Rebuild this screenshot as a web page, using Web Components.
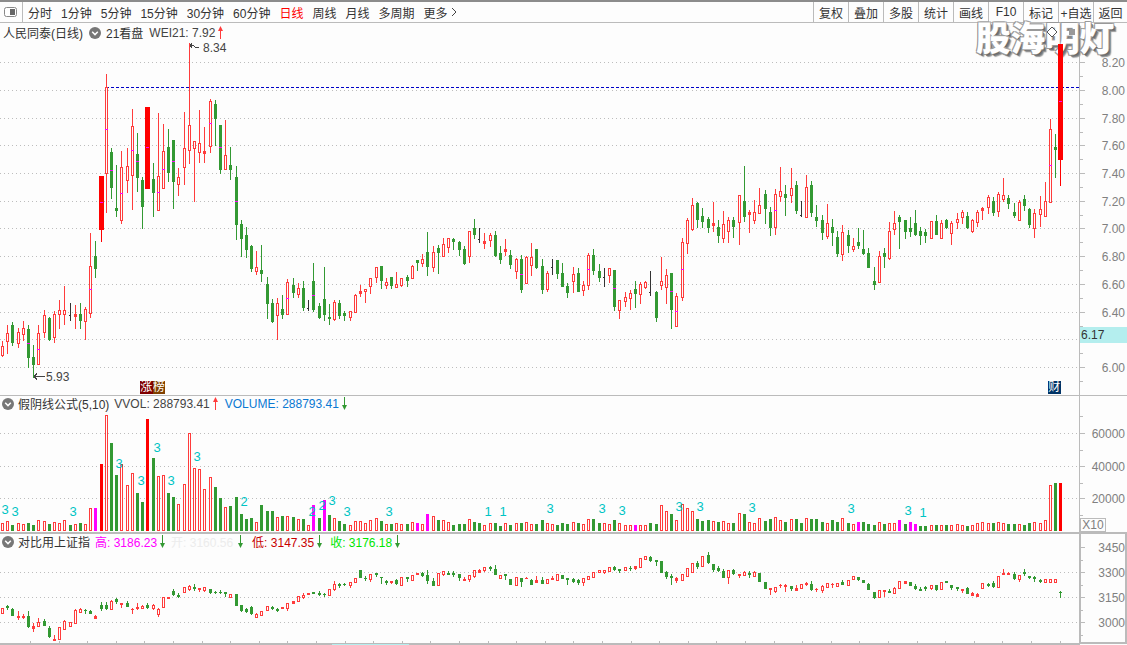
<!DOCTYPE html>
<html lang="zh">
<head>
<meta charset="utf-8">
<title>K线</title>
<style>
    html, body { margin: 0; background: #fdfdfd; }
    body { font: 12px "Liberation Sans", "Noto Sans CJK SC", sans-serif; color: #333; }
</style>
</head>
<body>
<stock-screen>
    <tool-bar slot="toolbar">
        <tool-item>分时</tool-item>
        <tool-item>1分钟</tool-item>
        <tool-item>5分钟</tool-item>
        <tool-item>15分钟</tool-item>
        <tool-item>30分钟</tool-item>
        <tool-item>60分钟</tool-item>
        <tool-item active>日线</tool-item>
        <tool-item>周线</tool-item>
        <tool-item>月线</tool-item>
        <tool-item>多周期</tool-item>
        <tool-item more>更多</tool-item>
        <tool-cell slot="cells">复权</tool-cell>
        <tool-cell slot="cells">叠加</tool-cell>
        <tool-cell slot="cells">多股</tool-cell>
        <tool-cell slot="cells">统计</tool-cell>
        <tool-cell slot="cells">画线</tool-cell>
        <tool-cell slot="cells">F10</tool-cell>
        <tool-cell slot="cells">标记</tool-cell>
        <tool-cell slot="cells">+自选</tool-cell>
        <tool-cell slot="cells" style="width:34px">返回</tool-cell>
    </tool-bar>

    <chart-panel slot="main" top="23" height="372" line="1" chart="main">
        <chart-legend slot="legend" style="padding-left:3px">
            <span>人民同泰(日线)</span>
            <round-toggle style="margin-left:6px"></round-toggle>
            <span style="margin-left:5px">21看盘</span>
            <span style="margin-left:6px;color:#444">WEI21: 7.92</span>
            <mini-arrow dir="up" style="margin-left:3px"></mini-arrow>
        </chart-legend>
        <y-axis slot="axis" top="23" height="372"
            labels="62:8.20 90:8.00 118:7.80 145:7.60 173:7.40 201:7.20 228:7.00 256:6.80 284:6.60 312:6.40 367:6.00"
            minor="76 104 132 159 187 215 242 270 298 326 353 381">
            <axis-flag kind="price" style="top:304px">6.17</axis-flag>
        </y-axis>
        <sign-badge slot="badges" style="left:140px;background:#800000">涨</sign-badge>
        <sign-badge slot="badges" style="left:152.5px;background:#804000">榜</sign-badge>
        <sign-badge slot="badges" style="left:1048px;background:#003366">财</sign-badge>
    </chart-panel>

    <chart-panel slot="volume" top="396" height="136" line="2" chart="volume">
        <chart-legend slot="legend" style="padding-left:2px;height:15px">
            <round-toggle></round-toggle>
            <span style="margin-left:4px">假阴线公式(5,10)</span>
            <span style="margin-left:5px;color:#444">VVOL: 288793.41</span>
            <mini-arrow dir="up" style="margin-left:3px"></mini-arrow>
            <span style="margin-left:7px;color:#0a78d2">VOLUME: 288793.41</span>
            <mini-arrow dir="down" style="margin-left:3px"></mini-arrow>
        </chart-legend>
        <y-axis slot="axis" top="396" height="136"
            labels="433:60000 466:40000 498:20000"
            minor="416 450 483 515">
            <axis-flag kind="scale" style="top:122px">X10</axis-flag>
        </y-axis>
    </chart-panel>

    <chart-panel slot="index" top="534" height="111" chart="index">
        <chart-legend slot="legend" style="padding-left:2px;height:15px">
            <round-toggle></round-toggle>
            <span style="margin-left:4px">对比用上证指</span>
            <span style="margin-left:5px;color:#ff00ff">高: 3186.23</span>
            <mini-arrow dir="down" style="margin-left:3px"></mini-arrow>
            <span style="margin-left:6px;color:#ececec">开: 3160.56</span>
            <mini-arrow dir="down" style="margin-left:5px"></mini-arrow>
            <span style="margin-left:9px;color:#c80000">低: 3147.35</span>
            <mini-arrow dir="down" style="margin-left:3px"></mini-arrow>
            <span style="margin-left:8px;color:#00e600">收: 3176.18</span>
            <mini-arrow dir="down" style="margin-left:3px"></mini-arrow>
        </chart-legend>
        <y-axis slot="axis" top="534" height="111" boxed
            labels="547:3450 572:3300 597:3150 622:3000"
            minor="560 585 610 635"></y-axis>
    </chart-panel>

    <water-mark slot="overlay">股海明灯</water-mark>
</stock-screen>

<script>
// numbers below are read off the picture at 3x: y = y0 + v / 3
const colOf = i => Math.floor(2.6 + 5.187 * i);

function parseSeg(start, y0, str) {
    return str.trim().split(/\s+/).map((tok, n) => {
        const v = tok.slice(1).split(',').map(Number);
        const y = k => Math.round(y0 + k / 3);
        const top = y(v[0]);
        const bot = v[1] === undefined ? top : y(v[1]);
        return {
            i: start + n,
            t: tok[0],
            top,
            bot,
            hi: v[2] === undefined ? top : y(v[2]),
            lo: v[3] === undefined ? bot : y(v[3]),
            mid: v[4] === undefined ? null : y(v[4]),
        };
    });
}

const MAIN = [
    ...parseSeg(0, 60, `r858,885,842,888 r820,842,795,878 g795,845,786,855 r816,848,803,860 r804,821,783,840 g807,890,795,920,850 g891,912,855,950
        r820,913,795,913,868 r766,815,750,832 g774,837,770,840 r762,830,752,845 r751,761,720,805 r750,763,678,792 k765,765,728,780 s763,767,735,803
        g762,780,728,803 r747,782,740,838 r618,760,518,772,688 g588,623,543,650 R348,506,348,543,427 r82,338,42,455,207 g276,380,264,414,330 g444,449,315,467
        r321,480,273,490,400 r318,359,264,397 r198,344,147,447,270 g283,350,219,392,303 g360,437,351,503 R141,383,141,383,261 g357,395,309,467
        r348,449,159,449,397 r273,383,192,383,327 g261,335,207,363 g240,362,240,443,303 r351,371,323,405 r264,320,155,372 r195,271,-51,308 r243,265,243,423
        r250,277,150,305 s273,278,201,305 r123,257,117,275,190 g132,173,120,255 g195,326,195,339,262 r285,328,180,328 g315,326,261,356 g351,491,318,536,424
        g492,533,480,588 g525,566,501,590 g558,623,555,632 r622,632,573,641 g630,638,555,662 g672,728,651,773 g729,783,717,786 r730,766,714,837`),
    ...parseSeg(54, 160, `g447,462,405,473 r367,463,357,463,415 g375,395,353,410 r385,401,369,410 g384,440,363,450 k443,443,420,449 g363,446,309,453,405 g438,470,430,473
        g417,462,321,480 g471,473,432,491 r427,477,420,480 g429,464,420,473 g459,464,453,480 r454,472,454,480 r405,455,402,455 s393,398,375,408 r388,394,387,426
        r355,377,355,399 r322,352,322,366 g318,360,318,384 r366,374,354,384 g351,375,351,384 r373,380,336,381 r355,374,355,378 g351,360,345,378 r319,355,316,355
        g300,305,300,330 r297,308,282,318 g277,318,216,345 r277,320,258,333 g264,276,255,339 r253,287,234,288 r235,260,235,276 g237,243,234,267 g246,267,243,285
        g267,309,258,312 r214,287,214,306 g204,222,177,234 k238,238,204,246 s243,248,219,264 r225,239,219,258 g225,285,213,288 g279,297,258,309 s267,272,237,285
        g285,312,270,324 r297,332,294,354 g297,387,285,396,343 r291,368,288,369 r291,315,249,345 g267,321,267,324 g318,387,297,399 r340,387,333,393 k321,321,297,342
        g300,339,300,354 g339,378,309,378 g378,396,369,411 r343,362,321,396 g339,393,324,393 r376,389,363,405 r285,374,279,387,327 g285,330,267,342 g333,351,312,363
        k351,351,324,378 r325,345,325,366 g330,438,330,450,385 r421,449,421,474 r411,422,396,438 r400,413,390,447 g387,399,363,441 r372,401,366,429 r366,381,363,384
        k397,397,333,405 g396,471,393,483 r363,374,291,387 r345,380,327,429 g339,447,339,504,393 r408,497,399,498,454 r246,410,234,420,327 r180,248,174,279`),
    ...parseSeg(133, 150, `r165,238,144,240 g159,207,156,231 g198,213,174,231 g207,231,201,246 s219,224,156,243 g231,255,210,276 r222,264,183,276 r210,242,201,276 g210,228,201,261
        r135,215,135,282 g153,198,48,213 s186,191,180,246 r187,209,150,219 r165,188,114,189 g132,174,120,219 g186,231,171,255 r132,231,117,252,180 r123,137,51,153
        g132,141,105,195 r114,135,54,156 g105,180,93,189 k195,195,153,198 r111,200,75,201 g105,186,93,198 g201,210,165,228 g210,246,195,267 r219,258,162,264
        g231,246,207,285 g261,309,243,318 r246,312,225,330 g255,285,240,306 r288,296,264,303 g276,285,234,294 g297,309,240,312 g309,351,294,351 g393,402,351,417
        r318,395,303,396 g309,318,294,351 r243,324,216,327 r219,236,183,252 g201,212,195,294 g210,243,210,264 g234,243,201,258 g219,252,180,255 g243,255,231,282
        g246,255,237,276 r214,263,214,264 g213,252,195,252 r219,263,210,264 g210,231,207,234 r219,248,213,282 r208,215,189,234 r186,200,180,219 g198,231,186,234
        r210,243,207,246 r186,215,180,228 s174,180,171,207 r141,170,135,189 g153,186,141,195 r132,182,126,198 r135,147,84,153 g144,159,135,174 g186,195,159,201
        r156,209,150,210 g147,165,135,180 g177,222,174,231 r189,233,177,261 r177,191,138,228 r153,197,96,198`),
    ...parseSeg(202, 30, `r297,515,267,515,406 g351,358,312,440 R42,387,42,465,214`),
];

const INDEX = [
    ...parseSeg(0, 530, `r235,248 g228,232,225,238 g238,254,234,254 s258,262,243,268 s258,260,253,265 g258,288,243,292 s289,293,280,302 r277,289,265,289 g272,284,268,286
        g294,318,288,320 s328,330,316,331 r292,328 r273,298,270,298 r277,287 r240,280,238,280 r237,247,234,247 g239,241,238,250 g243,250,240,250 s259,263,255,263
        g224,233,216,240 g224,234,216,237 r212,238,210,238 g208,214,203,219 s220,222,219,232 g220,227,214,229 s236,238,235,248 r231,235,220,237 r228,235,225,235
        g225,231,219,234 r225,235,222,237 r238,252,235,258 r202,231 s202,205 g183,192,177,195 g195,197,190,201 r172,187 r168,178,165,180 g172,174,162,180
        s175,177,175,183 r172,180,171,183 g178,186,176,188 g185,187,183,189 g185,187,180,190 g186,190,186,197 r193,200,192,200 g192,224 g225,241,225,243
        g236,244,234,246 g232,249,229,253 r252,260,250,260 r244,254 r229,239 g231,233,228,236 g237,239,234,243 s232,235 r220,233,219,240 s214,219,213,219 r199,212
        r194,200,190,204 s188,193 g187,190 g189,192,184,195 g191,193,188,198 r178,194 r162,178,154,180 g163,165,158,171 g161,163,159,166 r157,166,157,171 r145,156
        g120,141 g143,145,138,150 r133,147,133,153 g129,131,129,138 g140,142,140,158 g154,156,150,161 s154,156,154,159 g151,159,148,162 r141,164 g142,144,142,153
        r135,149 s128,133`),
    ...parseSeg(81, 495, `g234,241,232,243 g240,255,225,265 g258,270,250,270 r235,270 r229,236,229,239 g234,236,228,237 g234,236,228,243 g237,246,237,255 s252,254,247,255
        r241,252,241,258 r225,243,225,246 s226,231,222,231 r217,225,217,228 g217,219,213,225 g222,237,210,237 r240,248 g237,240,237,252 g252,267 r246,270 g249,258,249,273
        s248,250,246,250 g256,267,252,267 s255,261,243,261 g255,264,246,264 r253,264 s248,251,243,251 r237,255 g240,249 g249,252,249,267 g251,258,249,261 g255,261,252,267
        r249,261,249,270 r244,251 r232,246 r226,232 r226,231,226,234 r217,227 g216,222,213,225 g223,225,223,232 r217,225 g218,220,213,226 s214,219,214,222 r190,216 r184,193
        g186,195,183,198 g196,198,196,210 g198,231 g231,243,228,248 g244,247,237,267 s250,255,247,261 r237,255 r220,243`),
    ...parseSeg(133, 495, `r204,231 g204,213,198,219 r183,212 g180,202,171,204 g207,222,207,228 g218,225,214,228 g228,246,222,246 r225,247,225,264 g225,234,222,237 s237,239,237,246
        r231,240,228,240 g234,237,228,246 r231,243,228,243 g234,258 g261,279 s280,283,280,297 r276,287,276,291 s269,271,267,276 s269,273,267,288 g274,280,274,285
        s279,285,270,285 r267,279 s264,266,261,269 g267,282,258,285 s281,283,279,288 r273,285,270,291 r264,276 s266,268,264,276 r264,273 g261,267,255,267 r255,270
        r244,253 g246,251,246,255 g255,261 g267,282,264,282 g291,306,291,309 r285,305 s285,288,285,303 g288,291,282,291 r279,294,276,294 r258,279 s259,263 g261,270
        g273,279,267,282 g282,284,276,285 g276,278,273,285 r270,279,270,282 g270,282,270,285 r261,282 g259,262 g270,276,270,282 g277,280,277,285 s282,284,282,291`),
    ...parseSeg(186, 300, `g865,880,860,880 s880,886,875,886 s883,889,880,889 r850,865 g853,855,850,858 g850,858,843,861 r829,862 s818,823,808,823 s818,823,816,823 g823,835,817,838
        r825,838,825,843 g817,820,807,826 g829,831,829,835 g831,833,828,843 g841,843,838,846 r838,847 r838,847 r838,847 g875,877,873,891`),
];

// volume bars: kind + top, all standing on the baseline y = 531
function parseBars(start, y0, str) {
    return str.trim().split(/\s+/).map((tok, n) => ({
        i: start + n,
        t: tok[0],
        top: Math.round(y0 + Number(tok.slice(1)) / 3),
    }));
}

const VOLUME = [
    ...parseBars(0, 390, `r399 r394 g405 r400 r402 g399 g405 r390 r393 g402 r396 r399 r390 g405 r402 g399 r402 r354 m354 R222 r75 g159 g255 r222 r285 r249 g309 g336 R87 g204
        r258 r255 g309 g321 r342 r282 r129 r234 r237 r297 r261 g291 g324 r351 g348 g321 g372 g387 g384 r396 g345 g363 g363 r381 g378 r378 g381 r387 g387 r405 m345 g384
        m330 g375 r384 g393 g402 r405 r393 r393 r399 r390 r384 g393 r402 g402 r399 r402 g402 r396 m399`),
    ...parseBars(81, 495, `r87 m57 r64 g75 r76 r82 g90 g87 g87 r72 g81 g84 r90 r85 g84 g93 r85 g90 r85 g84 r82 r87 g87 g75 r85 r87 g90 g84 g87 r82 g84 r87 r72 g72 g84 r85 r87 g75 r85
        r91 r91 m90 r91 r91 g84 g87 r30 r48 g57 r75 r27 r39`),
    ...parseBars(133, 495, `r48 g72 g78 g75 r78 g81 r78 r84 g84 r54 g57 r81 r84 r69 g78 g72 r66 r75 g81 r72 g72 g84 r69 g72 g72 g81 r84 g75 g81 r69 g84 r87 m81 g81 g87 g90 r81 g87 r84 r84
        m75 g87 m81 m87 g93 g93 r90 g90 r90 g90 r90 r87`),
    ...parseBars(185, 300, `r675 g678 r675 r669 r666 r669 g669 r666 r669 g672 g672 r672 g675 g669 r666 r669 r660 r555 g549 R549`),
];

const VOL_MARKS = [
    [5, 509, '3'], [15, 511, '3'], [73, 511, '3'], [119, 463, '3'], [157, 447, '3'], [141, 480, '3'], [171, 480, '3'], [197, 456, '3'],
    [244, 501, '2'], [312, 511, '2'], [322, 505, '2'], [332, 500, '3'], [347, 511, '3'], [389, 511, '3'], [488, 511, '1'], [503, 511, '1'],
    [550, 508, '3'], [602, 508, '3'], [622, 510, '3'], [679, 506, '3'], [700, 506, '3'], [752, 507, '3'], [851, 508, '3'], [908, 510, '3'], [923, 512, '1'],
];

const COLORS = { r: '#ff3c3c', g: '#339933', R: '#ff0000', s: '#ff3c3c', k: '#333333', m: '#ff00ff' };

function box(x, y, w, h, fill) {
    return `<rect x="${x}" y="${y}" width="${w}" height="${Math.max(h, 1)}" fill="${fill}"/>`;
}

function hollow(x, y, w, h, color) {
    return `<rect x="${x + .5}" y="${y + .5}" width="${w - 1}" height="${Math.max(h - 1, 1)}" fill="#fdfdfd" stroke="${color}"/>`;
}

function dots(y, x2 = 1079) {
    return `<line x1="0" x2="${x2}" y1="${y + .5}" y2="${y + .5}" stroke="#bdbdbd" stroke-dasharray="1 3"/>`;
}

function candleSvg(c) {
    const x = colOf(c.i);
    const color = COLORS[c.t];
    let out = '';
    if (c.t === 'k') {
        out += box(x, c.hi, 1, c.lo - c.hi + 1, color) + box(x - 1, c.top, 1, 1, color);
        return out;
    }
    if (c.hi < c.top) out += box(x, c.hi, 1, c.top - c.hi, color);
    if (c.lo > c.bot) out += box(x, c.bot + 1, 1, c.lo - c.bot, color);
    const h = c.bot - c.top + 1;
    if (c.t === 'r' && h > 2) out += hollow(x - 1, c.top, 3, h, color);
    else if (c.t === 'R') out += box(x - 2, c.top, 5, h, color);
    else out += box(x - 1, c.top, 3, h, color);
    if (c.mid !== null) out += box(x - 1, c.mid, 3, 1, '#ff00ff');
    return out;
}

function barSvg(b) {
    const x = colOf(b.i) - 1;
    return b.t === 'r'
        ? hollow(x, b.top, 3, 531 - b.top, COLORS.r)
        : box(x, b.top, 3, 531 - b.top, COLORS[b.t]);
}

const DRAW = {
    main() {
        let s = [62, 90, 118, 145, 173, 201, 228, 256, 284, 312, 339, 367].map(y => dots(y)).join('');
        s += '<line x1="106" x2="1079" y1="87.5" y2="87.5" stroke="#0000c8" stroke-dasharray="3 2"/>';
        s += MAIN.map(candleSvg).join('');
        // high / low callouts
        s += '<path d="M190 45.5h3l3 2h3M190 45.5l2-2M190 45.5l2 2" fill="none" stroke="#444"/>';
        s += '<text x="203" y="52" fill="#444">8.34</text>';
        s += '<path d="M34 376.5h11M34 376.5l3-3M34 376.5l3 3" fill="none" stroke="#444"/>';
        s += '<text x="46" y="381" fill="#444">5.93</text>';
        return s;
    },
    volume() {
        let s = [433, 466, 498].map(y => dots(y)).join('');
        s += VOLUME.map(barSvg).join('');
        s += VOL_MARKS.map(([x, y, t]) =>
            `<text x="${x}" y="${y + 5}" fill="#00c4c4" font-size="13" text-anchor="middle">${t}</text>`).join('');
        return s;
    },
    index() {
        let s = [572, 597, 622].map(y => dots(y)).join('');
        s += INDEX.map(candleSvg).join('');
        s += box(0, 643, 1079, 2, '#bbbbbb') + box(332, 644, 77, 1, '#b4eeee');
        for (let x = 30; x < 1079; x += 28.6) s += box(Math.round(x), 641, 1, 2, '#bbbbbb');
        return s;
    },
};

class StockScreen extends HTMLElement {
    constructor() {
        super();
        this.attachShadow({ mode: 'open' }).innerHTML = `
            <style>
                :host { display: grid; grid-template-rows: 23px 373px 138px 111px; width: 1127px; height: 645px; overflow: hidden; position: relative; }
            </style>
            <slot name="toolbar"></slot>
            <slot name="main"></slot>
            <slot name="volume"></slot>
            <slot name="index"></slot>
            <slot name="overlay"></slot>`;
    }
}

class ToolBar extends HTMLElement {
    constructor() {
        super();
        this.attachShadow({ mode: 'open' }).innerHTML = `
            <style>
                :host { display: flex; height: 23px; box-sizing: border-box; border-top: 2px solid #8c8c8c; border-bottom: 1px solid #bbb; justify-content: space-between; }
                .left { display: flex; align-items: center; gap: 9px; }
                .toggle { width: 23px; height: 20px; box-sizing: border-box; border-right: 1px solid #bbb; margin-right: -4px; display: flex; align-items: center; justify-content: flex-end; padding-right: 5px; }
                .cells { display: flex; }
            </style>
            <div class="left">
                <div class="toggle">
                    <svg width="13" height="10" viewBox="0 0 13 10"><rect x=".5" y=".5" width="12" height="9" rx="2" fill="#fff" stroke="#888"/><rect x="6" y="2" width="5" height="6" fill="#666"/></svg>
                </div>
                <slot></slot>
            </div>
            <div class="cells"><slot name="cells"></slot></div>`;
    }
}

class ToolItem extends HTMLElement {
    constructor() {
        super();
        this.attachShadow({ mode: 'open' }).innerHTML = `
            <style>
                :host { display: flex; align-items: center; gap: 3px; white-space: nowrap; }
                :host([active]) { color: #ff0000; }
                svg { display: none; }
                :host([more]) svg { display: block; }
            </style>
            <slot></slot>
            <svg width="6" height="10" viewBox="0 0 6 10"><path d="M1 1l4 4-4 4" fill="none" stroke="#444"/></svg>`;
    }
}

class ToolCell extends HTMLElement {
    constructor() {
        super();
        this.attachShadow({ mode: 'open' }).innerHTML = `
            <style>
                :host { display: flex; align-items: center; justify-content: center; width: 35px; height: 20px; box-sizing: border-box; border-left: 1px solid #bbb; white-space: nowrap; }
            </style>
            <slot></slot>`;
    }
}

class ChartPanel extends HTMLElement {
    constructor() {
        super();
        const top = +this.getAttribute('top');
        const height = +this.getAttribute('height');
        const line = +this.getAttribute('line') || 0;
        const draw = DRAW[this.getAttribute('chart')]();
        this.attachShadow({ mode: 'open' }).innerHTML = `
            <style>
                :host { display: grid; grid-template-columns: 1079px 48px; height: ${height + line}px; box-sizing: border-box; border-bottom: ${line}px solid #bbb; }
                .plot { display: grid; position: relative; overflow: hidden; height: ${height}px; }
                .plot > svg, ::slotted(chart-legend) { grid-area: 1 / 1; }
                svg { display: block; shape-rendering: crispEdges; font: 12px "Liberation Sans", sans-serif; }
                text { shape-rendering: auto; }
            </style>
            <div class="plot">
                <svg width="1079" height="${height}" viewBox="0 ${top} 1079 ${height}">${draw}</svg>
                <slot name="legend"></slot>
                <slot name="badges"></slot>
            </div>
            <slot name="axis"></slot>`;
    }
}

class ChartLegend extends HTMLElement {
    constructor() {
        super();
        this.attachShadow({ mode: 'open' }).innerHTML = `
            <style>
                :host { display: flex; align-items: center; height: 19px; white-space: nowrap; align-self: start; }
            </style>
            <slot></slot>`;
    }
}

class RoundToggle extends HTMLElement {
    constructor() {
        super();
        this.attachShadow({ mode: 'open' }).innerHTML = `
            <style>:host { display: block; width: 12px; height: 12px; } svg { display: block; }</style>
            <svg width="12" height="12" viewBox="0 0 12 12"><circle cx="6" cy="6" r="6" fill="#777"/><path d="M3.2 4.8L6 7.6l2.8-2.8" fill="none" stroke="#fff" stroke-width="1.5"/></svg>`;
    }
}

class MiniArrow extends HTMLElement {
    constructor() {
        super();
        const up = this.getAttribute('dir') === 'up';
        const color = up ? '#ff3c3c' : '#339933';
        const path = up ? 'M2.5 0L5 5H3v8H2V5H0z' : 'M2 0h1v8h2L2.5 13 0 8h2z';
        this.attachShadow({ mode: 'open' }).innerHTML = `
            <style>:host { display: block; width: 5px; height: 13px; } svg { display: block; }</style>
            <svg width="5" height="13" viewBox="0 0 5 13"><path d="${path}" fill="${color}"/></svg>`;
    }
}

class YAxis extends HTMLElement {
    constructor() {
        super();
        const top = +this.getAttribute('top');
        const height = +this.getAttribute('height');
        const labels = this.getAttribute('labels').split(' ').map(p => p.split(':'));
        const minor = this.getAttribute('minor').split(' ');
        let s = '';
        for (const [y, t] of labels) {
            s += `<rect x="0" y="${y}" width="5" height="1" fill="#bbb"/>`;
            s += `<text x="45" y="${+y + 5}" text-anchor="end" fill="#808080">${t}</text>`;
        }
        for (const y of minor) s += `<rect x="0" y="${y}" width="3" height="1" fill="#bbb"/>`;
        if (this.hasAttribute('boxed')) {
            s += `<rect x="0" y="${top - 1}" width="46" height="${height - 1}" fill="none" stroke="#bbb" stroke-width="2"/>`;
        }
        this.attachShadow({ mode: 'open' }).innerHTML = `
            <style>
                :host { display: block; position: relative; height: ${height}px; box-sizing: border-box; border-left: 1px solid #bbb; overflow: hidden; }
                svg { display: block; font: 12px "Liberation Sans", sans-serif; }
            </style>
            <svg width="47" height="${height}" viewBox="0 ${top} 47 ${height}">${s}</svg>
            <slot></slot>`;
    }
}

class AxisFlag extends HTMLElement {
    constructor() {
        super();
        this.attachShadow({ mode: 'open' }).innerHTML = `
            <style>
                :host { position: absolute; left: 0; box-sizing: border-box; display: flex; align-items: center; }
                :host([kind="price"]) { width: 47px; height: 16px; background: #b4eeee; padding-left: 1px; color: #333; }
                :host([kind="scale"]) { width: 26px; height: 14px; border: 1px solid #bbb; justify-content: center; color: #808080; background: #fdfdfd; }
            </style>
            <slot></slot>`;
    }
}

class SignBadge extends HTMLElement {
    constructor() {
        super();
        this.attachShadow({ mode: 'open' }).innerHTML = `
            <style>
                :host { position: absolute; top: 358px; height: 13px; min-width: 12.5px; display: flex; align-items: center; justify-content: center; color: #fff; font-size: 12px; line-height: 13px; overflow: hidden; }
            </style>
            <slot></slot>`;
    }
}

// the big watermark, with the marks and the candle top that lie over it
class WaterMark extends HTMLElement {
    constructor() {
        super();
        this.attachShadow({ mode: 'open' }).innerHTML = `
            <style>
                :host { position: absolute; left: 976px; top: 16px; font: 900 34.5px/40px "Noto Sans CJK SC", sans-serif; color: #fff; white-space: nowrap;
                    text-shadow: -1px -1px 0 #999, 1px -1px 0 #aaa, -1px 1px 0 #999, 1px 1px 0 #666, 2px 2px 0 #777, 3px 3px 1px #999; }
                svg { position: absolute; left: 0; top: 0; shape-rendering: crispEdges; }
            </style>
            <slot></slot>
            <svg width="136" height="45" viewBox="976 16 136 45">
                <path d="M1052 27l5 5-5 5-5-5z" fill="#fff" stroke="#555"/>
                <rect x="1069" y="29" width="6" height="6" fill="#999"/>
                <rect x="1058" y="44" width="5" height="17" fill="#ff0000"/>
            </svg>`;
    }
}

customElements.define('stock-screen', StockScreen);
customElements.define('tool-bar', ToolBar);
customElements.define('tool-item', ToolItem);
customElements.define('tool-cell', ToolCell);
customElements.define('chart-panel', ChartPanel);
customElements.define('chart-legend', ChartLegend);
customElements.define('round-toggle', RoundToggle);
customElements.define('mini-arrow', MiniArrow);
customElements.define('y-axis', YAxis);
customElements.define('axis-flag', AxisFlag);
customElements.define('sign-badge', SignBadge);
customElements.define('water-mark', WaterMark);
</script>
</body>
</html>
